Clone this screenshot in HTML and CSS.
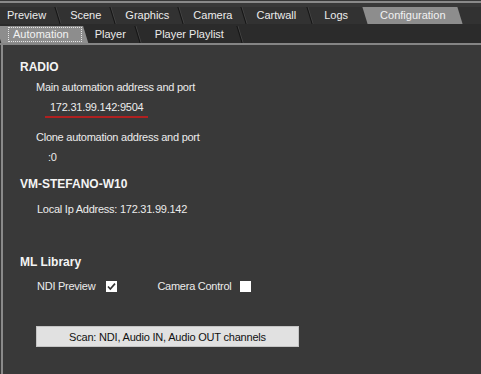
FILE: index.html
```html
<!DOCTYPE html>
<html lang="en">
<head>
  <meta charset="UTF-8">
  <title>Configuration</title>
  <link rel="stylesheet" href="styles.css">
</head>
<body>
  <div class="window">
    <div class="top-rule"></div>
    <div class="tabs main-tabs">
      <span class="tab">Preview</span>
      <span class="tab">Scene</span>
      <span class="tab">Graphics</span>
      <span class="tab">Camera</span>
      <span class="tab cartwall">Cartwall</span>
      <span class="tab logs">Logs</span>
      <span class="tab active">Configuration</span>
    </div>
    <div class="tabs sub-tabs">
      <span class="tab active"><span class="focus">Automation</span></span>
      <span class="tab">Player</span>
      <span class="tab">Player Playlist</span>
    </div>
    <div class="panel">
      <h3 class="heading">RADIO</h3>
      <div class="label">Main automation address and port</div>
      <div class="value"><span class="address">172.31.99.142:9504</span></div>
      <div class="label gap-sm">Clone automation address and port</div>
      <div class="value small">:0</div>

      <h3 class="heading host">VM-STEFANO-W10</h3>
      <div class="label local">Local Ip Address: 172.31.99.142</div>

      <h3 class="heading library">ML Library</h3>
      <div class="checks">
        <label class="check">NDI Preview
          <span class="box"><svg width="11" height="11" viewBox="0 0 11 11"><path d="M2 5.5 L4.3 8 L9 2.6" fill="none" stroke="#333" stroke-width="1.6"/></svg></span>
        </label>
        <label class="check camera">Camera Control
          <span class="box"></span>
        </label>
      </div>

      <button type="button" class="scan">Scan: NDI, Audio IN, Audio OUT channels</button>
    </div>
  </div>
</body>
</html>
```

FILE: styles.css
```css
body {
  margin: 0;
  background-color: #393939;
  font-family: "Liberation Sans", Arial, sans-serif;
  color: #ececec;
}

.window {
  width: 481px;
  height: 374px;
  overflow: hidden;
  background-color: #393939;
}

.top-rule {
  height: 2px;
  margin-top: 1px;
  margin-bottom: 4px;
  background-color: #8a8a8a;
}

.tabs {
  display: flex;
  font-size: 11px;
  background-color: #323232;
  overflow: hidden;
}

.main-tabs {
  height: 17px;
  line-height: 17px;
}

.sub-tabs {
  height: 19px;
  line-height: 17px;
  background-color: #2b2b2b;
  border-bottom: 2px solid #858585;
}

.tab {
  position: relative;
  isolation: isolate;
  padding: 0 12px;
  white-space: nowrap;
}

.main-tabs .tab:first-child {
  padding-left: 7px;
}

.tab::after {
  content: "";
  position: absolute;
  top: 0;
  bottom: 0;
  right: 0;
  width: 1px;
  background-color: #151515;
  box-shadow: 1px 0 0 #444444;
  transform: skewX(17deg);
}

.main-tabs .cartwall {
  padding-right: 14px;
}

.main-tabs .logs {
  padding-left: 14px;
}

.main-tabs .logs::after {
  display: none;
}

.tab.active {
  padding: 0 15px 0 20px;
  color: #f2f2f2;
}

.tab.active::before {
  content: "";
  position: absolute;
  top: 0;
  bottom: 0;
  left: 5px;
  right: 0;
  background-color: #8d8d8d;
  transform: skewX(17deg);
  z-index: -1;
}

.tab.active::after {
  display: none;
}

.sub-tabs .tab {
  margin-top: 2px;
}

.sub-tabs .tab.active {
  margin-left: 3px;
  padding: 0 3px 0 5px;
}

.sub-tabs .tab.active::before {
  left: -4px;
  right: -1px;
  bottom: -2px;
}

.sub-tabs .tab:nth-child(2) {
  padding-left: 10px;
}

.sub-tabs .tab:nth-child(3) {
  padding-left: 17px;
  padding-right: 16px;
}

.focus {
  display: inline-block;
  line-height: 13px;
  padding: 0 12px 0 4px;
  border: 1px dotted #e6e6e6;
}

.panel {
  height: 329px;
  margin-left: 1px;
  border-left: 2px solid #8a8a8a;
  padding: 12px 0 0 17px;
  font-size: 11px;
  letter-spacing: -0.25px;
}

.heading {
  margin: 0;
  font-size: 12px;
  font-weight: bold;
  line-height: 20px;
  letter-spacing: 0;
  color: #f4f4f4;
}

.label {
  line-height: 20px;
  padding-left: 16px;
}

.gap-sm {
  margin-top: 9px;
}

.value {
  line-height: 20px;
  padding-left: 25px;
}

.value.small {
  padding-left: 28px;
}

.address {
  display: inline-block;
  line-height: 18px;
  padding: 0 5px;
  border-bottom: 2px solid #b02020;
}

.host {
  margin-top: 7px;
}

.local {
  margin-top: 5px;
  padding-left: 17px;
}

.library {
  margin-top: 33px;
}

.checks {
  display: flex;
  margin-top: 4px;
  padding-left: 17px;
  line-height: 20px;
}

.check {
  display: flex;
  align-items: center;
}

.camera {
  margin-left: 40px;
}

.box {
  display: inline-block;
  width: 11px;
  height: 11px;
  margin-left: 11px;
  background-color: #ffffff;
}

.camera .box {
  margin-left: 8px;
}

.box svg {
  display: block;
}

.scan {
  display: block;
  width: 263px;
  height: 21px;
  margin: 30px 0 0 16px;
  padding: 0;
  background-color: #e1e1e1;
  border: 1px solid #c4c4c4;
  font-family: "Liberation Sans", Arial, sans-serif;
  font-size: 11px;
  letter-spacing: -0.2px;
  color: #111111;
}
```
